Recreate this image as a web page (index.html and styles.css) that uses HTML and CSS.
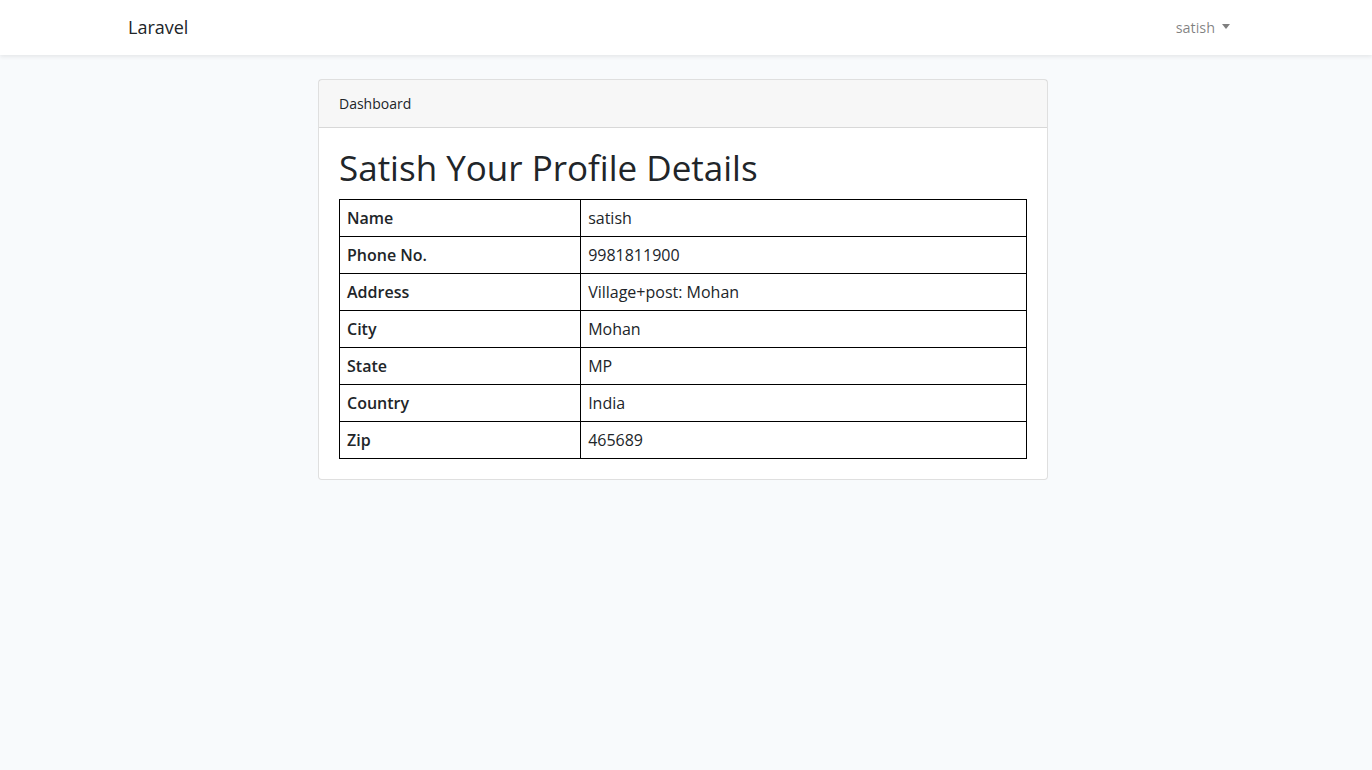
FILE: index.html
```html
<!DOCTYPE html>
<html lang="en">
<head>
<meta charset="utf-8">
<title>Laravel</title>
<link rel="stylesheet" href="styles.css">
</head>
<body>
  <nav class="navbar">
    <div class="frame">
      <div class="container nav-inner">
        <a class="brand" href="#">Laravel</a>
        <a class="user-toggle" href="#">satish <span class="caret"></span></a>
      </div>
    </div>
  </nav>
  <main class="main">
    <div class="frame">
      <div class="container center">
        <div class="card">
          <div class="card-header">Dashboard</div>
          <div class="card-body">
            <h1 class="title">Satish Your Profile Details</h1>
            <table class="details">
              <tr><th>Name</th><td>satish</td></tr>
              <tr><th>Phone No.</th><td>9981811900</td></tr>
              <tr><th>Address</th><td>Village+post: Mohan</td></tr>
              <tr><th>City</th><td>Mohan</td></tr>
              <tr><th>State</th><td>MP</td></tr>
              <tr><th>Country</th><td>India</td></tr>
              <tr><th>Zip</th><td>465689</td></tr>
            </table>
          </div>
        </div>
      </div>
    </div>
  </main>
</body>
</html>
```
FILE: styles.css
```css
* { box-sizing: border-box; }
html, body { margin: 0; padding: 0; }
body {
  background: #f8fafc;
  font-family: "Open Sans", "Noto Sans", "Liberation Sans", sans-serif;
  font-size: 14.4px;
  line-height: 1.6;
  color: #212529;
}
.frame { width: 1366px; }
.container {
  width: 1140px;
  margin: 0 auto;
  padding: 0 15px;
}
.navbar {
  background: #fff;
  height: 55px;
  box-shadow: 0 2px 4px rgba(0,0,0,.075);
}
.nav-inner {
  display: flex;
  align-items: center;
  justify-content: space-between;
  height: 55px;
}
.brand {
  font-size: 18px;
  color: #212529;
  text-decoration: none;
  line-height: 1.6;
}
.user-toggle {
  color: rgba(0,0,0,.5);
  text-decoration: none;
  padding: 8px;
  display: flex;
  align-items: center;
}
.caret {
  display: inline-block;
  margin-left: 7px;
  width: 0;
  height: 0;
  border-top: 5px solid rgba(0,0,0,.5);
  border-left: 4.5px solid transparent;
  border-right: 4.5px solid transparent;
  margin-top: -2px;
}
.main { padding-top: 24px; }
.center { display: flex; justify-content: center; }
.card {
  width: 730px;
  background: #fff;
  border: 1px solid rgba(0,0,0,.125);
  border-radius: 4px;
}
.card-header {
  background: rgba(0,0,0,.03);
  border-bottom: 1px solid rgba(0,0,0,.125);
  padding: 12px 20px;
  font-size: 14px;
  line-height: 23px;
}
.card-body { padding: 20px; }
.title {
  font-size: 35px;
  font-weight: 400;
  line-height: 40px;
  margin: 0 0 11px;
}
.details {
  width: 100%;
  border-collapse: collapse;
  font-size: 16px;
  line-height: 24px;
}
.details th, .details td {
  border: 1px solid #000;
  padding: 6px 7px;
  text-align: left;
  vertical-align: middle;
}
.details th { width: 35.1%; font-weight: 600; }
.details td { font-weight: 400; }
```
